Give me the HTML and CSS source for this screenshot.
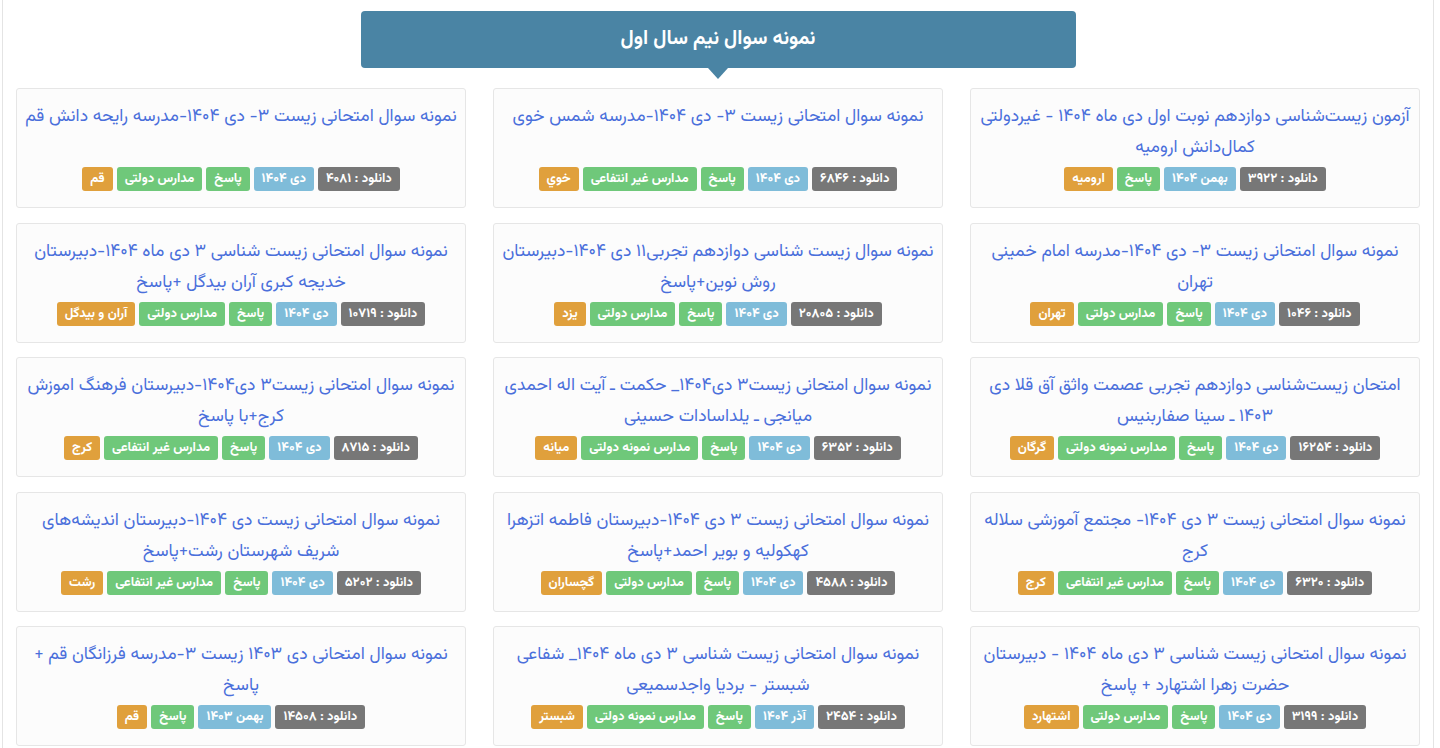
FILE: index.html
```html
<!DOCTYPE html>
<html lang="fa" dir="rtl">
<head>
<meta charset="utf-8">
<title>نمونه سوال نیم سال اول</title>
<link rel="stylesheet" href="styles.css">
</head>
<body>
<div class="page">
  <div class="head-wrap">
    <h2 class="head">نمونه سوال نیم سال اول</h2>
  </div>
  <div class="grid">
    <div class="card"><a class="title" href="#">آزمون زیست‌شناسی دوازدهم نوبت اول دی ماه ۱۴۰۴ - غیردولتی کمال‌دانش ارومیه</a>
      <div class="tags"><span class="tag gray">دانلود : ۳۹۲۲</span><span class="tag blue">بهمن ۱۴۰۴</span><span class="tag green">پاسخ</span><span class="tag orange">ارومیه</span></div></div>
    <div class="card"><a class="title" href="#">نمونه سوال امتحانی زیست ۳- دی ۱۴۰۴-مدرسه شمس خوی</a>
      <div class="tags"><span class="tag gray">دانلود : ۶۸۴۶</span><span class="tag blue">دی ۱۴۰۴</span><span class="tag green">پاسخ</span><span class="tag green">مدارس غیر انتفاعی</span><span class="tag orange">خوي</span></div></div>
    <div class="card"><a class="title" href="#">نمونه سوال امتحانی زیست ۳- دی ۱۴۰۴-مدرسه رایحه دانش قم</a>
      <div class="tags"><span class="tag gray">دانلود : ۴۰۸۱</span><span class="tag blue">دی ۱۴۰۴</span><span class="tag green">پاسخ</span><span class="tag green">مدارس دولتی</span><span class="tag orange">قم</span></div></div>

    <div class="card"><a class="title" href="#">نمونه سوال امتحانی زیست ۳- دی ۱۴۰۴-مدرسه امام خمینی تهران</a>
      <div class="tags"><span class="tag gray">دانلود : ۱۰۴۶</span><span class="tag blue">دی ۱۴۰۴</span><span class="tag green">پاسخ</span><span class="tag green">مدارس دولتی</span><span class="tag orange">تهران</span></div></div>
    <div class="card"><a class="title" href="#">نمونه سوال زیست شناسی دوازدهم تجربی۱۱ دی ۱۴۰۴-دبیرستان روش نوین+پاسخ</a>
      <div class="tags"><span class="tag gray">دانلود : ۲۰۸۰۵</span><span class="tag blue">دی ۱۴۰۴</span><span class="tag green">پاسخ</span><span class="tag green">مدارس دولتی</span><span class="tag orange">یزد</span></div></div>
    <div class="card"><a class="title" href="#">نمونه سوال امتحانی زیست شناسی ۳ دی ماه ۱۴۰۴-دبیرستان خدیجه کبری آران بیدگل +پاسخ</a>
      <div class="tags"><span class="tag gray">دانلود : ۱۰۷۱۹</span><span class="tag blue">دی ۱۴۰۴</span><span class="tag green">پاسخ</span><span class="tag green">مدارس دولتی</span><span class="tag orange">آران و بیدگل</span></div></div>

    <div class="card"><a class="title" href="#">امتحان زیست‌شناسی دوازدهم تجربی عصمت واثق آق قلا دی ۱۴۰۳ ـ سینا صفاربنیس</a>
      <div class="tags"><span class="tag gray">دانلود : ۱۶۲۵۴</span><span class="tag blue">دی ۱۴۰۴</span><span class="tag green">پاسخ</span><span class="tag green">مدارس نمونه دولتی</span><span class="tag orange">گرگان</span></div></div>
    <div class="card"><a class="title" href="#">نمونه سوال امتحانی زیست۳ دی۱۴۰۴_ حکمت ـ آیت اله احمدی میانجی ـ یلداسادات حسینی</a>
      <div class="tags"><span class="tag gray">دانلود : ۶۳۵۲</span><span class="tag blue">دی ۱۴۰۴</span><span class="tag green">پاسخ</span><span class="tag green">مدارس نمونه دولتی</span><span class="tag orange">میانه</span></div></div>
    <div class="card"><a class="title" href="#">نمونه سوال امتحانی زیست۳ دی۱۴۰۴-دبیرستان فرهنگ اموزش کرج+با پاسخ</a>
      <div class="tags"><span class="tag gray">دانلود : ۸۷۱۵</span><span class="tag blue">دی ۱۴۰۴</span><span class="tag green">پاسخ</span><span class="tag green">مدارس غیر انتفاعی</span><span class="tag orange">کرج</span></div></div>

    <div class="card"><a class="title" href="#">نمونه سوال امتحانی زیست ۳ دی ۱۴۰۴- مجتمع آموزشی سلاله کرج</a>
      <div class="tags"><span class="tag gray">دانلود : ۶۳۲۰</span><span class="tag blue">دی ۱۴۰۴</span><span class="tag green">پاسخ</span><span class="tag green">مدارس غیر انتفاعی</span><span class="tag orange">کرج</span></div></div>
    <div class="card"><a class="title" href="#">نمونه سوال امتحانی زیست ۳ دی ۱۴۰۴-دبیرستان فاطمه اتزهرا کهکولیه و بویر احمد+پاسخ</a>
      <div class="tags"><span class="tag gray">دانلود : ۴۵۸۸</span><span class="tag blue">دی ۱۴۰۴</span><span class="tag green">پاسخ</span><span class="tag green">مدارس دولتی</span><span class="tag orange">گچساران</span></div></div>
    <div class="card"><a class="title" href="#">نمونه سوال امتحانی زیست دی ۱۴۰۴-دبیرستان اندیشه‌های شریف شهرستان رشت+پاسخ</a>
      <div class="tags"><span class="tag gray">دانلود : ۵۲۰۲</span><span class="tag blue">دی ۱۴۰۴</span><span class="tag green">پاسخ</span><span class="tag green">مدارس غیر انتفاعی</span><span class="tag orange">رشت</span></div></div>

    <div class="card"><a class="title" href="#">نمونه سوال امتحانی زیست شناسی ۳ دی ماه ۱۴۰۴ - دبیرستان حضرت زهرا اشتهارد + پاسخ</a>
      <div class="tags"><span class="tag gray">دانلود : ۳۱۹۹</span><span class="tag blue">دی ۱۴۰۴</span><span class="tag green">پاسخ</span><span class="tag green">مدارس دولتی</span><span class="tag orange">اشتهارد</span></div></div>
    <div class="card"><a class="title" href="#">نمونه سوال امتحانی زیست شناسی ۳ دی ماه ۱۴۰۴_ شفاعی شبستر - بردیا واجدسمیعی</a>
      <div class="tags"><span class="tag gray">دانلود : ۲۴۵۴</span><span class="tag blue">آذر ۱۴۰۴</span><span class="tag green">پاسخ</span><span class="tag green">مدارس نمونه دولتی</span><span class="tag orange">شبستر</span></div></div>
    <div class="card"><a class="title" href="#">نمونه سوال امتحانی دی ۱۴۰۳ زیست ۳-مدرسه فرزانگان قم + پاسخ</a>
      <div class="tags"><span class="tag gray">دانلود : ۱۴۵۰۸</span><span class="tag blue">بهمن ۱۴۰۳</span><span class="tag green">پاسخ</span><span class="tag orange">قم</span></div></div>
  </div>
</div>
</body>
</html>
```
FILE: styles.css
```css
html, body {
  margin: 0;
  padding: 0;
  background: #ffffff;
}
body {
  font-family: "Vazirmatn", "Noto Sans Arabic", "DejaVu Sans", sans-serif;
}
.page {
  margin: 0 6px 0 2px;
  width: 1432px;
  border-left: 1px solid #e4e4e4;
  border-right: 1px solid #e4e4e4;
  padding: 11px 13px 0 13px;
  min-height: 748px;
  box-sizing: border-box;
}
.head-wrap {
  display: flex;
  justify-content: center;
  margin-bottom: 20px;
}
.head {
  position: relative;
  width: 715px;
  height: 57px;
  margin: 0;
  background: #4a84a4;
  color: #ffffff;
  border-radius: 4px;
  font-size: 20px;
  font-weight: bold;
  display: flex;
  align-items: center;
  justify-content: center;
  box-sizing: border-box;
  padding-bottom: 2px;
}
.head::after {
  content: "";
  position: absolute;
  left: 50%;
  bottom: -11px;
  transform: translateX(-50%);
  border-left: 10px solid transparent;
  border-right: 10px solid transparent;
  border-top: 11px solid #4a84a4;
}
.grid {
  direction: rtl;
  display: grid;
  grid-template-columns: repeat(3, 450px);
  column-gap: 27px;
  row-gap: 14.5px;
  justify-content: center;
}
.card {
  background: #fcfcfc;
  border: 1px solid #e6e6e6;
  border-radius: 3px;
  height: 120px;
  box-sizing: border-box;
  padding: 12px 7px 0 7px;
  text-align: center;
  display: flex;
  flex-direction: column;
}
.title {
  display: block;
  color: #4a6fdb;
  text-decoration: none;
  font-size: 17.5px;
  line-height: 31px;
  height: 62px;
  overflow: hidden;
}
.tags {
  margin-top: 4px;
  display: flex;
  justify-content: center;
  gap: 4px;
}
.tag {
  display: inline-block;
  color: #ffffff;
  font-size: 13px;
  font-weight: bold;
  height: 24px;
  line-height: 24px;
  padding: 0 8px;
  border-radius: 3px;
  white-space: nowrap;
}
.gray { background: #777777; }
.blue { background: #7fbcd9; }
.green { background: #6fc87a; }
.orange { background: #e0a03c; }
```
